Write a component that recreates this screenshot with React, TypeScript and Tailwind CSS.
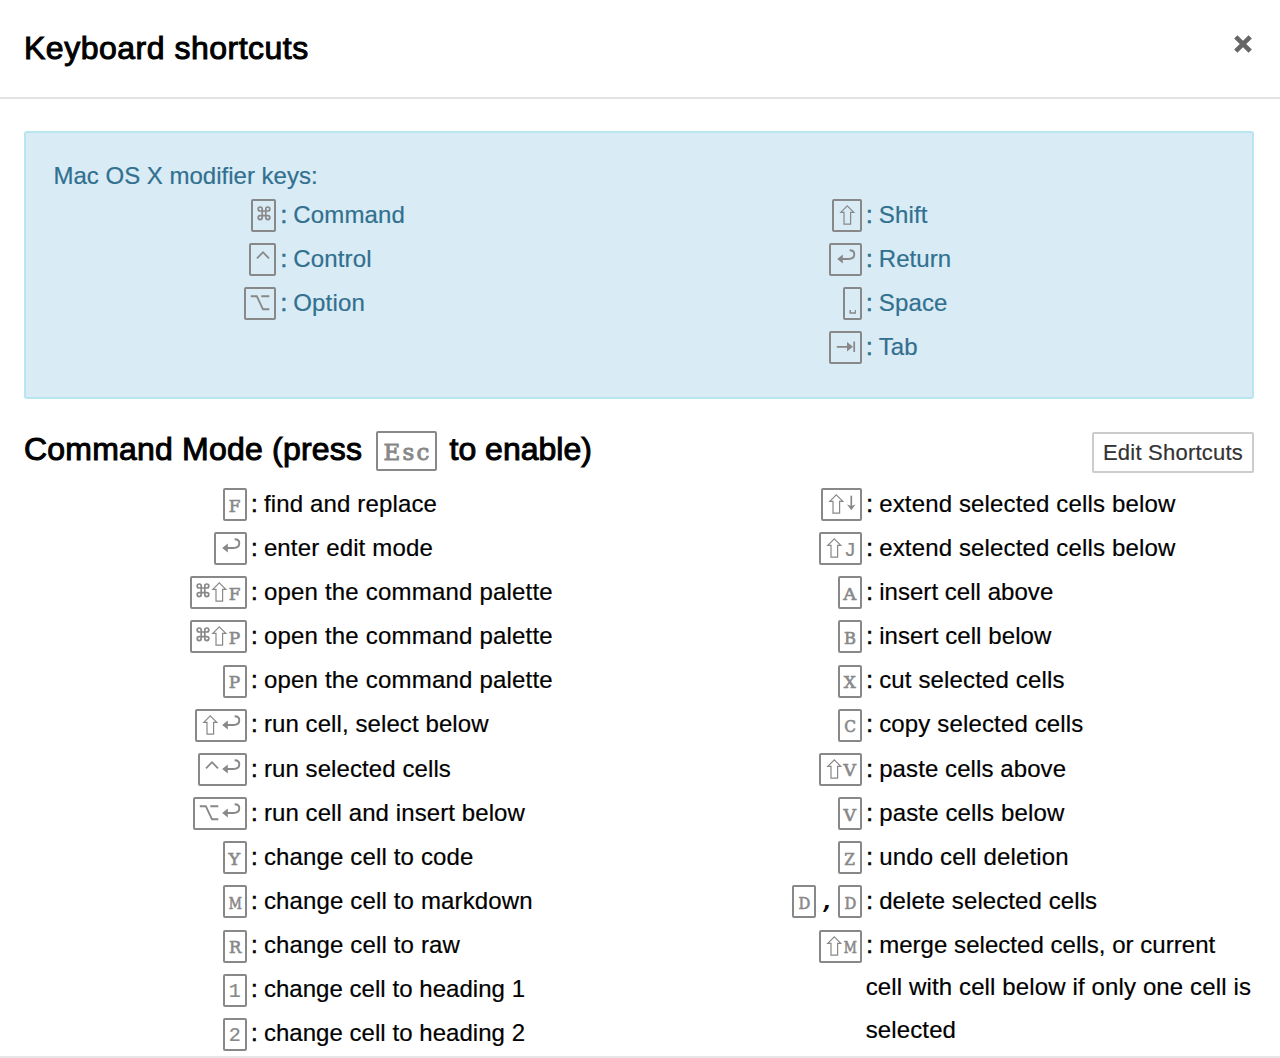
import React from "react";

function Glyph({ name }: { name: string }) {
  switch (name) {
    case "cmd":
      return (
        <svg className="h-[29px] w-[13.8px] shrink-0" viewBox="0 0 13.8 29" fill="none" stroke="currentColor" strokeWidth="1.7">
          <path d="M4.8 10H3.2A2 2 0 1 1 5.2 8V16.6A2 2 0 1 1 3.2 14.6H10.8A2 2 0 1 1 8.8 16.6V8A2 2 0 1 1 10.8 10Z" />
        </svg>
      );
    case "shift":
      return (
        <svg className="h-[29px] w-[18.5px] shrink-0" viewBox="0 0 18.5 29" fill="none" stroke="currentColor" strokeWidth="1.2">
          <path d="M9.3 4.9L15.8 11.4H12.6V23.1H6V11.4H2.8Z" />
        </svg>
      );
    case "ret":
      return (
        <svg className="h-[29px] w-[21.3px] shrink-0" viewBox="0 0 21.3 29" fill="none" stroke="currentColor" strokeWidth="1.9">
          <path d="M6 14H13.5C17.4 14 19.3 11.8 19.3 9.1C19.3 6.6 17.3 5.2 14.6 5.2" />
          <path d="M2.2 14L7.8 9.6V18.4Z" fill="currentColor" stroke="none" />
        </svg>
      );
    case "ctrl":
      return (
        <svg className="h-[29px] w-[16px] shrink-0" viewBox="0 0 16 29" fill="none" stroke="currentColor" strokeWidth="1.8">
          <path d="M2 13.4L8 7.2L14 13.4" />
        </svg>
      );
    case "opt":
      return (
        <svg className="h-[29px] w-[21.3px] shrink-0" viewBox="0 0 21.3 29" fill="none" stroke="currentColor" strokeWidth="1.9">
          <path d="M1.8 7.2H7.8L14 20.3H20.3M12.3 7.2H20.3" />
        </svg>
      );
    case "space":
      return (
        <svg className="h-[29px] w-[7px] shrink-0" viewBox="0 0 7 29" fill="none" stroke="currentColor" strokeWidth="1.5">
          <path d="M1.2 21V24.1H6.6V21" />
        </svg>
      );
    case "tab":
      return (
        <svg className="h-[29px] w-[21.3px] shrink-0" viewBox="0 0 21.3 29" fill="none" stroke="currentColor" strokeWidth="1.7">
          <path d="M1.8 13.8H14M19.2 8.6V19" />
          <path d="M12 9L18 13.8L12 18.6Z" fill="currentColor" stroke="none" />
        </svg>
      );
    case "down":
      return (
        <svg className="h-[29px] w-[10.6px] shrink-0" viewBox="0 0 10.6 29" fill="none" stroke="currentColor" strokeWidth="1.7">
          <path d="M5.3 5.7V17" />
          <path d="M1 14.6L5.3 20.2L9.6 14.6L5.3 16Z" fill="currentColor" stroke="none" />
        </svg>
      );
    default:
      return <Letter ch={name} />;
  }
}

const letterStyle: Record<string, string> = {
  F: "scale-x-[1.05]",
  P: "scale-x-[1.06]",
  Y: "scale-x-[1.1]",
  M: "scale-x-[0.8]",
  R: "scale-x-[1.02]",
  A: "scale-x-[1.12]",
  B: "scale-x-[1.02]",
  X: "scale-x-[1.06]",
  C: "scale-x-[0.96]",
  V: "scale-x-[1.08]",
  Z: "scale-x-[0.96]",
  D: "scale-x-[0.92]",
};

function Letter({ ch }: { ch: string }) {
  const slab = letterStyle[ch];
  return (
    <span className="flex h-[29px] w-[12.5px] shrink-0 items-center justify-center pt-[4px] leading-none">
      {slab ? (
        <span className={"inline-block font-['DejaVu_Serif'] text-[16px] leading-none tracking-normal [-webkit-text-stroke:0.6px_#888] " + slab}>{ch}</span>
      ) : (
        <span className="inline-block font-['Liberation_Mono'] text-[20px] leading-none tracking-normal [-webkit-text-stroke:0.2px_#888]">{ch}</span>
      )}
    </span>
  );
}

function Key({ keys }: { keys: string[] }) {
  return (
    <kbd className="flex h-[33px] items-center rounded-[2px] border-2 border-[#888] px-[3.75px] text-[#888]">
      {keys.map((k, i) => (
        <Glyph key={i} name={k} />
      ))}
    </kbd>
  );
}

type Item = { combos: string[][]; lines: string[]; tracking?: string };

function Row({ item, keyWidth, gap }: { item: Item; keyWidth: string; gap: string }) {
  return (
    <div className={"flex h-[44.17px] items-start " + gap}>
      <div className={"flex shrink-0 items-center justify-end " + keyWidth}>
        {item.combos.map((c, i) => (
          <React.Fragment key={i}>
            {i > 0 && <span className="w-[22px] pl-[1px] text-center font-['DejaVu_Sans_Mono'] text-[22px] font-bold italic leading-[33px] text-black">,</span>}
            <Key keys={c} />
          </React.Fragment>
        ))}
      </div>
      <div className="mt-[-5.4px] whitespace-nowrap leading-[42.3px] [-webkit-text-stroke:0.2px_currentColor]">
        {item.lines.map((l, i) => (
          <div key={i} className={i === 0 ? item.tracking : "tracking-[0.13px]"}>
            {i === 0 && <span className="inline-block w-[13.5px] pl-[0.7px] [-webkit-text-stroke:0.6px_currentColor]">:</span>}
            {l}
          </div>
        ))}
      </div>
    </div>
  );
}

const one = (keys: string[], ...lines: string[]): Item => ({ combos: [keys], lines });
const snug = (item: Item): Item => ({ ...item, tracking: "tracking-[0.04px]" });
const mid = (item: Item): Item => ({ ...item, tracking: "tracking-[0.09px]" });

const modLeft = [one(["cmd"], "Command"), one(["ctrl"], "Control"), one(["opt"], "Option")];
const modRight = [one(["shift"], "Shift"), snug(one(["ret"], "Return")), one(["space"], "Space"), snug(one(["tab"], "Tab"))];

const cmdLeft = [
  one(["F"], "find and replace"),
  one(["ret"], "enter edit mode"),
  { ...one(["cmd", "shift", "F"], "open the command palette"), tracking: "tracking-[0.2px]" },
  { ...one(["cmd", "shift", "P"], "open the command palette"), tracking: "tracking-[0.2px]" },
  { ...one(["P"], "open the command palette"), tracking: "tracking-[0.2px]" },
  mid(one(["shift", "ret"], "run cell, select below")),
  mid(one(["ctrl", "ret"], "run selected cells")),
  mid(one(["opt", "ret"], "run cell and insert below")),
  one(["Y"], "change cell to code"),
  one(["M"], "change cell to markdown"),
  one(["R"], "change cell to raw"),
  snug(one(["1"], "change cell to heading 1")),
  snug(one(["2"], "change cell to heading 2")),
];

const cmdRight: Item[] = [
  one(["shift", "down"], "extend selected cells below"),
  one(["shift", "J"], "extend selected cells below"),
  snug(one(["A"], "insert cell above")),
  mid(one(["B"], "insert cell below")),
  one(["X"], "cut selected cells"),
  one(["C"], "copy selected cells"),
  mid(one(["shift", "V"], "paste cells above")),
  one(["V"], "paste cells below"),
  one(["Z"], "undo cell deletion"),
  mid({ combos: [["D"], ["D"]], lines: ["delete selected cells"] }),
  snug(one(["shift", "M"], "merge selected cells, or current", "cell with cell below if only one cell is", "selected")),
];

export default function App() {
  return (
    <div className="flex h-[1058px] w-[1280px] flex-col overflow-hidden bg-white font-['Liberation_Sans',sans-serif] text-[24px] tracking-[0.15px] text-black">
      <header className="flex h-[99px] shrink-0 items-start justify-between border-b-2 border-[#e2e2e2] pl-6 pr-[28px]">
        <h4 className="mt-[28px] text-[32px] leading-[40px] tracking-[0.5px] [-webkit-text-stroke:1px_black]">Keyboard shortcuts</h4>
        <button className="mt-[35px]" aria-label="Close">
          <svg className="h-[18px] w-[18px]" viewBox="0 0 18 18" fill="none" stroke="#666" strokeWidth="4.6">
            <path d="M1.8 1.8L16.2 16.2M16.2 1.8L1.8 16.2" />
          </svg>
        </button>
      </header>

      <section className="ml-6 mt-[32px] h-[268px] w-[1230px] shrink-0 rounded-[3px] border-2 border-[#b9e5ee] bg-[#d9ebf5] text-[#31708f]">
        <p className="ml-[27.5px] mt-[22px] leading-[42px] tracking-[0px] [-webkit-text-stroke:0.2px_currentColor]">Mac OS X modifier keys:</p>
        <div className="mt-[2px] flex">
          <div className="w-[585.5px]">
            {modLeft.map((it, i) => (
              <Row key={i} item={it} keyWidth="w-[250.3px]" gap="gap-[3.5px]" />
            ))}
          </div>
          <div>
            {modRight.map((it, i) => (
              <Row key={i} item={it} keyWidth="w-[250.3px]" gap="gap-[3.5px]" />
            ))}
          </div>
        </div>
      </section>

      <div className="ml-6 mt-[32px] flex h-[57px] w-[1230px] shrink-0 items-start justify-between">
        <h4 className="flex items-start whitespace-pre text-[32px] leading-[36px] tracking-[0.2px]">
          <span className="w-[352px] [-webkit-text-stroke:1px_black]">Command Mode (press</span>
          <kbd className="flex h-[40px] w-[61px] items-center justify-center rounded-[2px] border-2 border-[#888] pl-[2px] pt-[3px] font-['DejaVu_Serif'] text-[23px] leading-none tracking-[2.2px] text-[#888] [-webkit-text-stroke:0.9px_#888]">Esc</kbd>
          <span className="ml-[12.5px] tracking-[0px] [-webkit-text-stroke:1px_black]">to enable)</span>
        </h4>
        <button className="mt-[1px] h-[41px] w-[162px] whitespace-nowrap rounded-[2px] border-2 border-[#ccc] text-[22px] leading-[36px] tracking-[0.22px] text-[#333] [-webkit-text-stroke:0.2px_currentColor]">Edit Shortcuts</button>
      </div>

      <div className="ml-6 flex h-[568px] shrink-0">
        <div className="w-[615.3px] shrink-0">
          {cmdLeft.map((it, i) => (
            <Row key={i} item={it} keyWidth="w-[222.7px]" gap="gap-[3.7px]" />
          ))}
        </div>
        <div>
          {cmdRight.map((it, i) => (
            <Row key={i} item={it} keyWidth="w-[222.7px]" gap="gap-[3.7px]" />
          ))}
        </div>
      </div>
      <div className="h-[2px] shrink-0 bg-[#e5e5e5]" />
    </div>
  );
}
